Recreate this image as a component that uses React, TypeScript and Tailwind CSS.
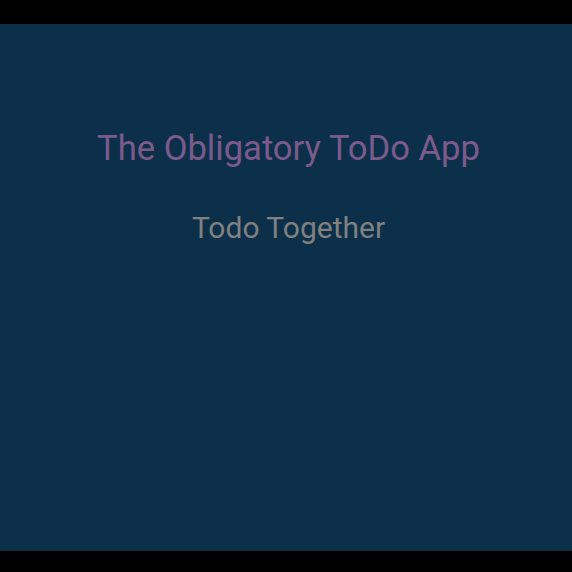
export default function App() {
    return (
        <div className="h-[572px] bg-black pt-[24px] font-['Roboto',sans-serif]">
            <section className="h-[527px] bg-[#0c3049] flex flex-col items-center pl-[5px] pt-[107px]">
                <h1 className="text-[34.6px] leading-none text-[#7d5a8c]">
                    The Obligatory ToDo App
                </h1>
                <h2 className="mt-[47px] text-[30px] leading-none text-[#808080]">
                    Todo Together
                </h2>
            </section>
        </div>
    );
}
